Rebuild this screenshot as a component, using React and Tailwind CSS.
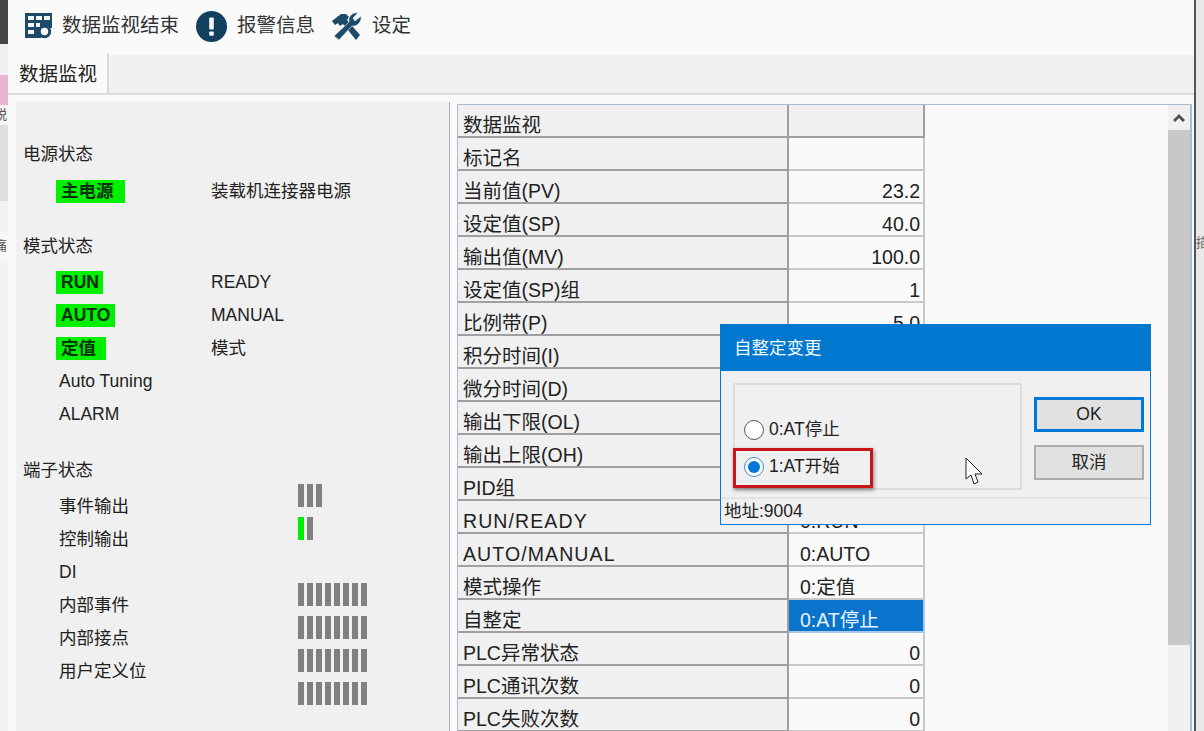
const cjk = { fontFamily: '"Liberation Sans", "Noto Sans CJK SC", sans-serif' };

const rows = [
  ["数据监视", "", "head"],
  ["标记名", ""],
  ["当前值(PV)", "23.2", "num"],
  ["设定值(SP)", "40.0", "num"],
  ["输出值(MV)", "100.0", "num"],
  ["设定值(SP)组", "1", "num"],
  ["比例带(P)", "5.0", "num"],
  ["积分时间(I)", "", "num"],
  ["微分时间(D)", "", "num"],
  ["输出下限(OL)", "", "num"],
  ["输出上限(OH)", "", "num"],
  ["PID组", "", "num"],
  ["RUN/READY", "0:RUN"],
  ["AUTO/MANUAL", "0:AUTO"],
  ["模式操作", "0:定值"],
  ["自整定", "0:AT停止", "sel"],
  ["PLC异常状态", "0", "num"],
  ["PLC通讯次数", "0", "num"],
  ["PLC失败次数", "0", "num"],
];

function TableIcon() {
  return (
    <svg width="30" height="28" viewBox="0 0 30 28" className="shrink-0">
      <path d="M1 1h27v15h-2a9 9 0 0 0-9 10H1z" fill="#1c4a68" />
      <g fill="#f4f6f8">
        <rect x="4" y="4" width="6" height="4" />
        <rect x="12" y="4" width="6" height="4" />
        <rect x="20" y="4" width="6" height="4" />
        <rect x="4" y="11" width="6" height="4" />
        <rect x="12" y="11" width="4" height="4" />
        <rect x="4" y="18" width="6" height="4" />
      </g>
      <circle cx="20.5" cy="19.5" r="5.2" fill="#fafafa" stroke="#1c4a68" strokeWidth="3" />
    </svg>
  );
}

function AlarmIcon() {
  return (
    <svg width="31" height="31" viewBox="0 0 31 31" className="shrink-0">
      <circle cx="15.5" cy="15.5" r="15.5" fill="#12405f" />
      <rect x="13.2" y="6.5" width="4.6" height="12" rx="1" fill="#f4f6f8" />
      <rect x="13.2" y="20.5" width="4.6" height="4.2" rx="1" fill="#f4f6f8" />
    </svg>
  );
}

function ToolsIcon() {
  return (
    <svg width="30" height="29" viewBox="0 0 30 29" className="shrink-0">
      <g fill="#1c4a68">
        <path d="M0 9 L9 2 L14 2 L17 5 L15 8 L28 23 L24 28 L11 12 L8 14 L6 11 L3 13 Z" />
        <path d="M2 24 L17 10 C16 5 20 0 26 1 L21 6 L23 9 L29 4 C30 10 25 15 20 14 L7 28 Z" stroke="#fafafa" strokeWidth="0.6" />
      </g>
    </svg>
  );
}

function Badge({ children, width }) {
  return (
    <span className={`flex h-[23px] items-center bg-[#00f000] pl-[5px] text-[17.5px] font-bold text-[#06300a] ${width}`}>
      {children}
    </span>
  );
}

function Bars({ lit = 0, count }) {
  return (
    <div className="flex h-[33px] items-center gap-[3px]">
      {Array.from({ length: count }).map((_, i) => (
        <span
          key={i}
          className={i < lit ? "h-[23px] w-[6px] bg-[#00ee00]" : "h-[23px] w-[6px] bg-[#808080]"}
        />
      ))}
    </div>
  );
}

function StatusRow({ left, right }) {
  return (
    <div className="flex h-[33px] items-center pl-[33px]">
      <div className="w-[155px]">{left}</div>
      <div>{right}</div>
    </div>
  );
}

function LeftPanel() {
  return (
    <div className="h-full w-[433px] shrink-0 bg-[#f0f0f0] pl-[7px] text-[17.5px] text-[#222]">
      <div className="mt-[36px] flex h-[33px] items-center">电源状态</div>
      <div className="mt-[4px]">
        <StatusRow left={<Badge width="w-[69px]">主电源</Badge>} right="装载机连接器电源" />
      </div>
      <div className="mt-[22px] flex h-[33px] items-center">模式状态</div>
      <div className="mt-[3px]">
        <StatusRow left={<Badge width="w-[47px]">RUN</Badge>} right="READY" />
        <StatusRow left={<Badge width="w-[59px]">AUTO</Badge>} right="MANUAL" />
        <StatusRow left={<Badge width="w-[50px]">定值</Badge>} right="模式" />
        <StatusRow left={<span className="pl-[3px]">Auto Tuning</span>} />
        <StatusRow left={<span className="pl-[3px]">ALARM</span>} />
      </div>
      <div className="mt-[23px] flex h-[33px] items-center">端子状态</div>
      <div className="flex">
        <div className="w-[275px] pl-[36px] pt-[3px]">
          {["事件输出", "控制输出", "DI", "内部事件", "内部接点", "用户定义位"].map((t) => (
            <div key={t} className="flex h-[33px] items-center">{t}</div>
          ))}
        </div>
        <div className="-mt-[8px]">
          <Bars count={3} />
          <Bars count={2} lit={1} />
          <div className="h-[33px]" />
          <Bars count={8} />
          <Bars count={8} />
          <Bars count={8} />
          <Bars count={8} />
        </div>
      </div>
    </div>
  );
}

function DataTable() {
  return (
    <div className="flex h-full min-w-0 flex-1 border-b-0 border-l border-r-2 border-t border-[#a9bdd6] bg-[#fafafa]">
      <div className="w-[467px] shrink-0">
        {rows.map(([label, value, kind]) => (
          <div key={label} className="flex h-[33px] text-[19.5px] leading-[20px] text-[#222]">
            <div
              className={
                label === "RUN/READY" || label === "AUTO/MANUAL"
                  ? "flex w-[331px] items-end border-b-2 border-r-2 border-[#a0a0a0] bg-[#f0f0f0] pb-[1px] pl-[5px] tracking-[1.1px]"
                  : "flex w-[331px] items-end border-b-2 border-r-2 border-[#a0a0a0] bg-[#f0f0f0] pb-[1px] pl-[5px]"
              }
            >
              {label}
            </div>
            <div
              className={
                kind === "head"
                  ? "w-[136px] border-b-2 border-r-2 border-[#a0a0a0] bg-[#f0f0f0]"
                  : kind === "sel"
                    ? "flex w-[136px] items-end border-b-2 border-r-2 border-[#a9c7e6] bg-[#0a74cc] pb-[1px] pl-[11px] text-[#e8f2fb]"
                    : kind === "num"
                      ? "flex w-[136px] items-end justify-end border-b-2 border-r-2 border-[#c8c8c8] pb-[1px] pr-[3px]"
                      : "flex w-[136px] items-end border-b-2 border-r-2 border-[#c8c8c8] pb-[1px] pl-[11px]"
              }
            >
              {value}
            </div>
          </div>
        ))}
      </div>
      <div className="flex-1" />
      <div className="flex w-[22px] shrink-0 flex-col bg-[#f0f0f0]">
        <div className="flex h-[25px] items-center justify-center">
          <svg width="12" height="10" viewBox="0 0 12 10">
            <path d="M1 8 L6 3 L11 8" fill="none" stroke="#505050" strokeWidth="3" />
          </svg>
        </div>
        <div className="h-[515px] bg-[#c8c8c8]" />
      </div>
    </div>
  );
}

function Dialog() {
  return (
    <div className="absolute left-[720px] top-[324px] flex h-[201px] w-[431px] flex-col border border-[#0078d0] bg-[#f0f0f0] text-[#222]">
      <div className="flex h-[46px] shrink-0 items-center bg-[#0078d0] pl-[13px] text-[17.5px] text-[#f2f8fd]">
        自整定变更
      </div>
      <div className="flex flex-1 pl-[12px] pt-[12px]">
        <div className="relative h-[107px] w-[289px] border-2 border-[#dcdcdc] pl-[9px] pt-[26px] text-[17.5px]">
          <div className="flex h-[37px] items-center gap-[5px]">
            <span className="h-[20px] w-[20px] rounded-full border border-[#555] bg-white" />
            0:AT停止
          </div>
          <div className="flex h-[37px] items-center gap-[5px]">
            <span className="flex h-[20px] w-[20px] items-center justify-center rounded-full border border-[#3a8fd8] bg-white">
              <span className="h-[12px] w-[12px] rounded-full bg-[#0078d7]" />
            </span>
            1:AT开始
          </div>
          <div className="absolute left-[-2px] top-[63px] h-[40px] w-[140px] border-[3px] border-[#c8171a] shadow-[1px_2px_4px_rgba(0,0,0,0.45)]" />
          <svg width="20" height="29" viewBox="0 0 20 29" className="absolute left-[230px] top-[72px]">
            <path d="M1 1 L1 22 L6 18 L9 27 L13 25 L10 17 L17 17 Z" fill="#fff" stroke="#222" strokeWidth="1" />
          </svg>
        </div>
        <div className="ml-[12px] flex flex-col gap-[13px] pt-[14px] text-[17.5px]">
          <div className="flex h-[35px] w-[110px] items-center justify-center border-[3px] border-[#0078d7] bg-[#e1e1e1]">OK</div>
          <div className="flex h-[35px] w-[110px] items-center justify-center border-2 border-[#adadad] bg-[#e1e1e1]">取消</div>
        </div>
      </div>
      <div className="flex h-[27px] shrink-0 items-center border-t-2 border-[#e4e4e4] pl-[3px] text-[17.5px]">
        地址:9004
      </div>
    </div>
  );
}

export default function App() {
  return (
    <div className="relative flex h-[731px] w-[1204px] overflow-hidden bg-[#e8e8e8]" style={cjk}>
      {/* background window peeking out on the left */}
      <div className="flex w-[8px] shrink-0 flex-col text-[13px] leading-none text-[#555]">
        <div className="h-[44px] bg-[#454545]" />
        <div className="h-[31px] bg-[#f0f0f0]" />
        <div className="h-[30px] bg-[#e9b6d0]" />
        <div className="h-[20px] overflow-hidden bg-[#f5f5f5]">
          <span className="-ml-[6px] block pt-[3px]">锐</span>
        </div>
        <div className="h-[76px] bg-[#dedede]" />
        <div className="h-[30px] bg-[#f2f2f2]" />
        <div className="h-[30px] overflow-hidden bg-[#f8f8f8]">
          <span className="-ml-[6px] block pt-[8px]">痛</span>
        </div>
        <div className="flex-1 bg-[#f2f2f2]" />
      </div>

      <div className="flex h-full w-[1188px] shrink-0 flex-col border-r-2 border-[#555] bg-[#fafafa]">
        <div className="flex h-[55px] shrink-0 items-center pb-[3px] pl-[16px] text-[19.5px] text-[#333]">
          <TableIcon />
          <span className="ml-[8px]">数据监视结束</span>
          <span className="ml-[17px]"><AlarmIcon /></span>
          <span className="ml-[10px]">报警信息</span>
          <span className="ml-[17px]"><ToolsIcon /></span>
          <span className="ml-[10px]">设定</span>
        </div>
        <div className="flex h-[40px] shrink-0 items-end border-b-2 border-[#dcdcdc] bg-[#f0f0f0]">
          <div className="flex h-[40px] w-[101px] items-center border-r-2 border-[#dcdcdc] bg-[#fafafa] pl-[11px] pt-[3px] text-[19.5px] text-[#222]">
            数据监视
          </div>
        </div>
        <div className="flex min-h-0 flex-1 pl-[8px] pt-[7px]">
          <LeftPanel />
          <div className="h-full w-[8px] shrink-0 border-l border-[#b0b0b0]" />
          <div className="h-full min-w-0 flex-1 pr-[2px] pt-[2px]">
            <DataTable />
          </div>
        </div>
      </div>

      <div className="flex-1 bg-[#e8e8e8] text-[13px] leading-none text-[#666]">
        <div className="mt-[236px] overflow-hidden">
          <span className="block">描</span>
        </div>
      </div>

      <Dialog />
    </div>
  );
}
